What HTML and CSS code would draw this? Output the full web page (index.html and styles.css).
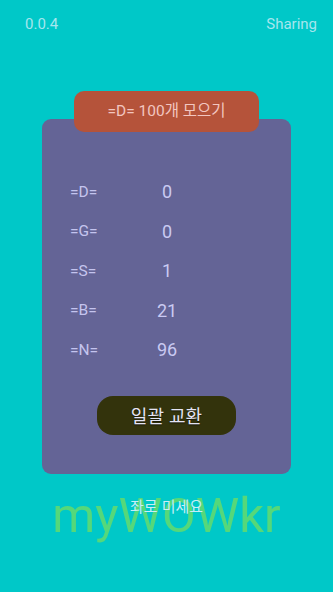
FILE: index.html
```html
<!DOCTYPE html>
<html lang="ko">

<head>
    <meta charset="UTF-8" />
    <meta name="viewport" content="width=device-width, initial-scale=1.0" />
    <title>myWOWkr</title>
    <link rel="stylesheet" href="styles.css">
</head>

<body>
    <div class="screen">
        <div class="top-bar">
            <span class="version">0.0.4</span>
            <span class="sharing">Sharing</span>
        </div>

        <div class="goal-badge">=D= 100개 모으기</div>

        <div class="card">
            <div class="stat-row">
                <div class="stat-label">=D=</div>
                <div class="stat-value">0</div>
            </div>
            <div class="stat-row">
                <div class="stat-label">=G=</div>
                <div class="stat-value">0</div>
            </div>
            <div class="stat-row">
                <div class="stat-label">=S=</div>
                <div class="stat-value">1</div>
            </div>
            <div class="stat-row">
                <div class="stat-label">=B=</div>
                <div class="stat-value">21</div>
            </div>
            <div class="stat-row">
                <div class="stat-label">=N=</div>
                <div class="stat-value">96</div>
            </div>

            <button class="btn-exchange" type="button">일괄 교환</button>
        </div>

        <div class="footer">
            <div class="brand">myWOWkr</div>
            <div class="hint">좌로 미세요</div>
        </div>
    </div>
</body>

</html>
```
FILE: styles.css
```css
* {
    margin: 0;
    padding: 0;
    box-sizing: border-box;
}

body {
    font-family: Roboto, "Noto Sans CJK KR", sans-serif;
    background: #00c8c8;
    width: 333px;
    height: 592px;
    overflow: hidden;
}

.screen {
    display: flex;
    flex-direction: column;
}

.top-bar {
    display: flex;
    justify-content: space-between;
    padding: 14px 16px 0 25px;
    height: 34px;
    font-size: 15px;
    line-height: 20px;
    color: #a6e6ee;
}

.goal-badge {
    position: relative;
    z-index: 1;
    width: 185px;
    height: 41px;
    margin: 57px 0 0 74px;
    background: #b5533a;
    border-radius: 10px;
    color: #f2c6c0;
    font-size: 15.5px;
    line-height: 41px;
    text-align: center;
}

.card {
    width: 249px;
    margin: -13px 0 0 42px;
    padding: 53px 0 39px 28px;
    background: #646496;
    border-radius: 9px;
    display: flex;
    flex-direction: column;
}

.stat-row {
    display: grid;
    grid-template-columns: 71px 52px;
    align-items: center;
    height: 39.5px;
}

.stat-label {
    font-size: 15.5px;
    color: #c4c4ee;
}

.stat-value {
    font-size: 18px;
    color: #cacaf2;
    text-align: center;
}

.btn-exchange {
    align-self: flex-start;
    margin: 26px 0 0 27px;
    width: 139px;
    height: 39px;
    border: none;
    border-radius: 16px;
    background: #33330c;
    color: #e4e4f4;
    font-family: "Noto Sans CJK KR", sans-serif;
    font-size: 18px;
    text-shadow: 0 1px 1px rgba(0, 0, 0, 0.6);
}

.footer {
    position: relative;
    margin-top: 12px;
    text-align: center;
}

.brand {
    font-size: 49px;
    line-height: 60px;
    color: #55d87a;
}

.hint {
    position: absolute;
    top: 10px;
    left: 0;
    right: 0;
    font-family: "Noto Sans CJK KR", sans-serif;
    font-size: 15px;
    line-height: 20px;
    color: #c8eef6;
}
```
